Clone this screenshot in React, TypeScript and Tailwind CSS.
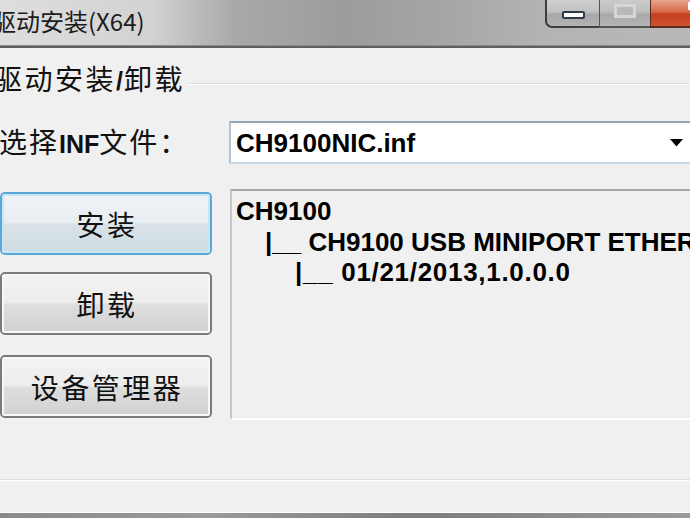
import React from "react";

const CJK = "font-['Noto_Sans_CJK_SC',sans-serif]";
const LAT = "font-['Liberation_Sans',Arial,sans-serif]";

function WinButton({ label, primary, className = "" }: { label: string; primary?: boolean; className?: string }) {
  return (
    <div
      className={`h-[63px] w-[212px] rounded-[5px] border-2 ${
        primary ? "border-[#58a9da]" : "border-[#7a7a7a]"
      } ${className}`}
    >
      <div
        className={`flex h-full w-full items-center justify-center rounded-[3px] border-2 ${
          primary
            ? "border-[#c9e6f5] bg-[linear-gradient(#eef3f6_0%,#e7edf1_48%,#d8e2e8_52%,#d0dbe2_100%)]"
            : "border-[#f7f7f7] bg-[linear-gradient(#f3f3f3_0%,#ececec_48%,#dedede_52%,#d2d2d2_100%)]"
        } pl-[2px] text-[28px] leading-none tracking-[2.5px] text-[#111] ${CJK}`}
      >
        {label}
      </div>
    </div>
  );
}

export default function App() {
  return (
    <div className="flex h-[518px] w-[690px] flex-col overflow-hidden bg-[#f0f0f0]">
      {/* Title bar */}
      <div className="flex h-[45px] shrink-0 items-start bg-[linear-gradient(90deg,#dedede_0%,#d2d2d2_22%,#a9a9a9_34%,#9c9c9c_50%,#a4a4a4_62%,#b4b4b4_80%,#b8b8b8_100%)]">
        <div className={`ml-[-8px] mt-[7px] whitespace-nowrap text-[24px] leading-[28px] text-[#1c1c1c] ${CJK}`}>
          驱动安装(X64)
        </div>
        <div className="flex-1" />
        <div className="flex h-[28px] items-stretch">
          <div className="flex w-[54px] items-center justify-center rounded-bl-[7px] border-b-2 border-l-2 border-[#3e3e3e] bg-[linear-gradient(#cfcfcf_0%,#c2c2c2_45%,#a7a7a7_55%,#b3b3b3_100%)] pt-[4px]">
            <div className="h-[8px] w-[23px] rounded-[2px] border-2 border-[#2f3a48] bg-white" />
          </div>
          <div className="flex w-[51px] items-center justify-center border-b-2 border-l border-[#555] bg-[linear-gradient(#cbcbcb_0%,#bdbdbd_45%,#a9a9a9_55%,#b4b4b4_100%)] pb-[4px]">
            <div className="h-[14px] w-[22px] rounded-[1px] border-[3px] border-[#d6d6d6] bg-[#b8b8b8]" />
          </div>
          <div className="flex w-[40px] items-start justify-end border-b-2 border-l border-[#5a2a1e] bg-[linear-gradient(#e8a590_0%,#d86a4a_45%,#c2401f_55%,#d2532f_100%)]">
            <div className="mr-[-2px] mt-[2px] h-[8px] w-[4px] bg-white" />
          </div>
        </div>
      </div>
      <div className="h-[1px] shrink-0 bg-[#8a8a8a]" />
      <div className="h-[2px] shrink-0 bg-[#5f5f5f]" />

      {/* Content */}
      <div className="flex flex-1 flex-col">
        {/* Group header */}
        <div className="mt-[16px] flex h-[29px] items-start">
          <div className={`ml-[-6px] shrink-0 whitespace-nowrap text-[28px] leading-[29px] tracking-[2.5px] text-[#111] ${CJK}`}>
            驱动安装<span className={`${LAT} font-bold text-[25px] tracking-[1px]`}>/</span>卸载
          </div>
          <div className="ml-[4px] mt-[19px] flex-1">
            <div className="h-[1px] bg-[#d5dfe5]" />
            <div className="h-[1px] bg-white" />
          </div>
        </div>

        {/* File select row */}
        <div className="mt-[28px] flex h-[43px] items-center">
          <div className={`ml-[-1px] w-[230px] shrink-0 whitespace-nowrap text-[28px] leading-[29px] tracking-[2px] text-[#111] ${CJK}`}>
            选择<span className={`${LAT} font-bold text-[25px] tracking-[0px]`}>INF</span>文件：
          </div>
          <div className="flex h-[43px] w-[466px] shrink-0 items-center border-2 border-t-[#8fa3b6] border-l-[#b4c4d2] border-b-[#c8dae8] border-r-[#c8dae8] bg-white">
            <div className={`flex-1 pl-[5px] text-[26px] font-bold leading-none text-black ${LAT}`}>CH9100NIC.inf</div>
            <svg width="13" height="8" viewBox="0 0 13 8" className="mr-[10px]">
              <path d="M0 0 H13 L6.5 7.5 Z" fill="#000" />
            </svg>
          </div>
        </div>

        {/* Buttons + list */}
        <div className="mt-[25px] flex items-start">
          <div className="flex w-[230px] shrink-0 flex-col pt-[3px]">
            <WinButton label="安装" primary />
            <WinButton label="卸载" className="mt-[17px]" />
            <WinButton label="设备管理器" className="mt-[20px]" />
          </div>
          <div className="h-[231px] w-[470px] shrink-0 overflow-hidden rounded-bl-[3px] border-b-2 border-l-2 border-t-2 border-b-white border-l-[#c6c6c6] border-t-[#a8a8a8] bg-[#f0f0f0] pl-[4px] pt-[5px]">
            <div className={`whitespace-nowrap text-[26px] font-bold leading-[30.5px] text-black ${LAT}`}>
              <div>CH9100</div>
              <div className="pl-[29px]">|__ CH9100 USB MINIPORT ETHERNET ADAPTER</div>
              <div className="pl-[59px] tracking-[0.7px]">|__ 01/21/2013,1.0.0.0</div>
            </div>
          </div>
        </div>

        <div className="flex-1" />
        {/* group bottom border */}
        <div className="h-[1px] bg-[#d5dfe5]" />
        <div className="h-[1px] bg-white" />
        <div className="h-[31px]" />
        <div className="h-[1px] bg-white" />
        <div className="h-[5px] bg-[linear-gradient(90deg,#8a8a8a_0%,#9a9a9a_30%,#7d7d7d_60%,#9a9a9a_100%)]" />
      </div>
    </div>
  );
}
